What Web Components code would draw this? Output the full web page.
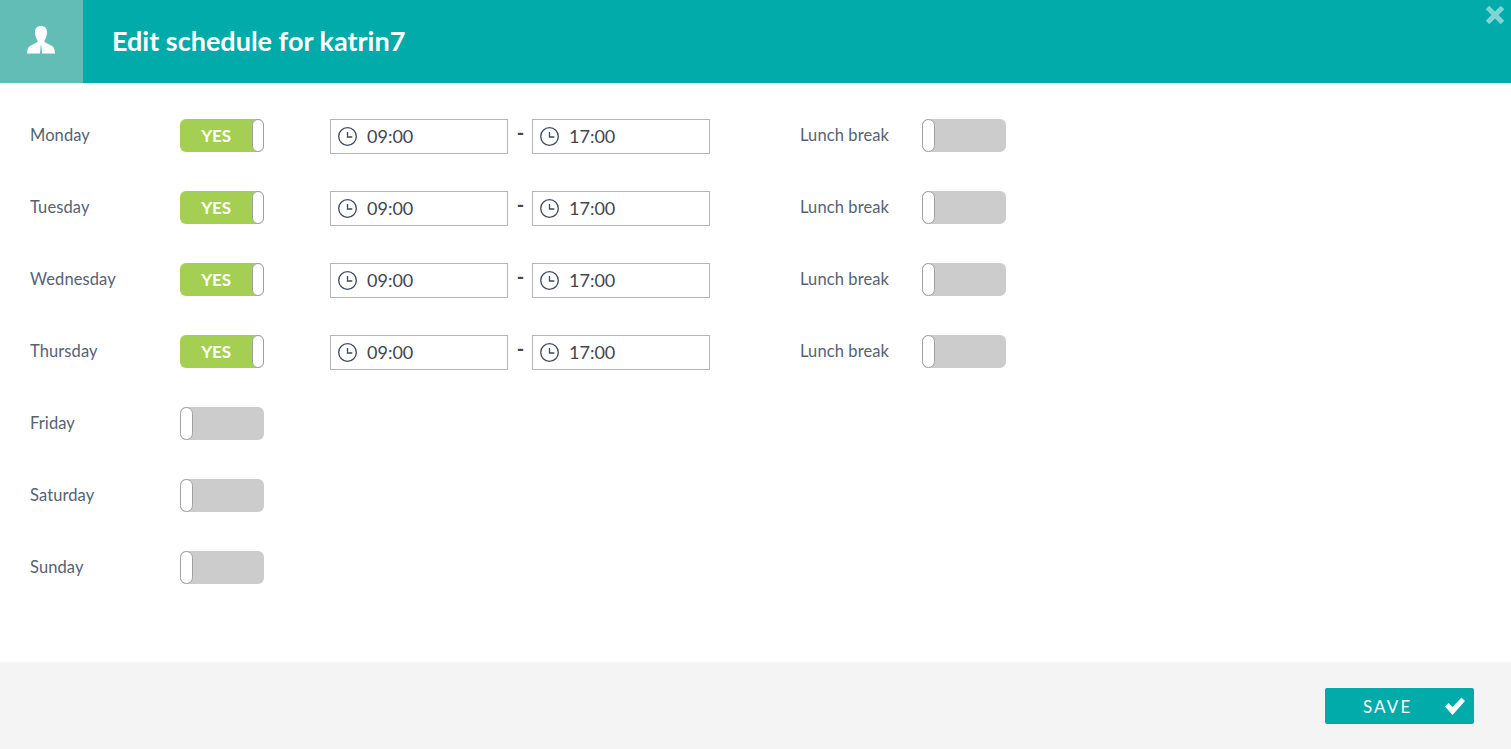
<!DOCTYPE html>
<html lang="en">
<head>
<meta charset="utf-8">
<title>Edit schedule</title>
<style>
  html, body { height: 100%; margin: 0; }
  body { background: #fff; color: #566273; font-family: Lato, 'Open Sans', 'Liberation Sans', sans-serif; overflow: hidden; }
</style>
</head>
<body>
<schedule-dialog heading="Edit schedule for katrin7">
  <schedule-row day="Monday" on from="09:00" to="17:00"></schedule-row>
  <schedule-row day="Tuesday" on from="09:00" to="17:00"></schedule-row>
  <schedule-row day="Wednesday" on from="09:00" to="17:00"></schedule-row>
  <schedule-row day="Thursday" on from="09:00" to="17:00"></schedule-row>
  <schedule-row day="Friday"></schedule-row>
  <schedule-row day="Saturday"></schedule-row>
  <schedule-row day="Sunday"></schedule-row>
</schedule-dialog>

<script>
class ToggleSwitch extends HTMLElement {
  constructor() {
    super();
    this.attachShadow( {mode: 'open'} );
    this.shadowRoot.innerHTML = `
      <style>
        :host {
          background: #cccccc;
          border-radius: 6px;
          box-sizing: border-box;
          display: flex;
          flex: none;
          height: 33px;
          position: relative;
          width: 84px;
        }
        :host( [on] ) {
          background: #a5cf52;
        }
        span {
          color: #fff;
          display: none;
          font-size: 17px;
          font-weight: 700;
          letter-spacing: -0.2px;
          line-height: 33px;
          text-align: center;
          width: 72px;
        }
        :host( [on] ) span {
          display: block;
        }
        i {
          background: #fff;
          border: 1px solid #a0a0a0;
          border-radius: 6.5px;
          box-sizing: border-box;
          height: 33px;
          left: 0;
          position: absolute;
          top: 0;
          width: 13px;
        }
        :host( [on] ) i {
          left: auto;
          right: 0;
          width: 12px;
        }
      </style>
      <span>YES</span>
      <i></i>
    `;
  }
}

class TimeField extends HTMLElement {
  constructor() {
    super();
    this.attachShadow( {mode: 'open'} );
    this.shadowRoot.innerHTML = `
      <style>
        :host {
          align-items: center;
          border: 1px solid #b5b5b5;
          box-sizing: border-box;
          color: #3f4650;
          display: flex;
          flex: none;
          font-size: 18px;
          gap: 10px;
          height: 35px;
          padding: 0 0 0 7px;
          width: 178px;
        }
        svg {
          display: block;
          flex: none;
          height: 19px;
          width: 19px;
        }
        span {
          margin-top: -2px;
        }
      </style>
      <svg viewBox="0 0 19 19" fill="none" stroke="#3d4a5c" stroke-width="1.3">
        <circle cx="9.5" cy="9.5" r="8.8"></circle>
        <path d="M9.5 5v5h4.8"></path>
      </svg>
      <span></span>
    `;
  }

  connectedCallback() {
    this.shadowRoot.querySelector( 'span' ).textContent = this.getAttribute( 'value' );
  }
}

class ScheduleRow extends HTMLElement {
  constructor() {
    super();
    this.attachShadow( {mode: 'open'} );
    this.shadowRoot.innerHTML = `
      <style>
        :host {
          align-items: flex-start;
          display: flex;
          height: 72px;
        }
        .label {
          font-size: 16.5px;
          letter-spacing: 0.1px;
          line-height: 33px;
        }
        .day {
          width: 150px;
        }
        .times {
          align-items: flex-start;
          display: flex;
          margin-left: 66px;
        }
        .dash {
          box-sizing: border-box;
          color: #3f4650;
          font-size: 20px;
          font-weight: 700;
          line-height: 26px;
          padding-left: 1px;
          text-align: center;
          width: 24px;
        }
        .lunch {
          margin-left: 90px;
          width: 122px;
        }
      </style>
      <span class="label day"></span>
      <toggle-switch class="main"></toggle-switch>
    `;
  }

  connectedCallback() {
    this.shadowRoot.querySelector( '.day' ).textContent = this.getAttribute( 'day' );

    if( !this.hasAttribute( 'on' ) ) return;

    this.shadowRoot.querySelector( '.main' ).setAttribute( 'on', '' );
    this.shadowRoot.appendChild( document.createRange().createContextualFragment( `
      <div class="times">
        <time-field value="${this.getAttribute( 'from' )}"></time-field>
        <span class="dash">-</span>
        <time-field value="${this.getAttribute( 'to' )}"></time-field>
      </div>
      <span class="label lunch">Lunch break</span>
      <toggle-switch></toggle-switch>
    ` ) );
  }
}

class ScheduleDialog extends HTMLElement {
  constructor() {
    super();
    this.attachShadow( {mode: 'open'} );
    this.shadowRoot.innerHTML = `
      <style>
        :host {
          display: flex;
          flex-direction: column;
          height: 749px;
        }
        header {
          align-items: center;
          background: #00abaa;
          display: flex;
          flex: none;
          height: 83px;
          position: relative;
        }
        .avatar {
          align-items: center;
          background: #62bdb6;
          display: flex;
          height: 83px;
          justify-content: center;
          width: 83px;
        }
        .avatar svg {
          display: block;
          height: 28px;
          margin: 0 1px 3px 0;
          width: 28px;
        }
        h1 {
          color: #fff;
          font-size: 27px;
          font-weight: 700;
          margin: -2px 0 0 29px;
        }
        .close {
          height: 20px;
          position: absolute;
          right: 6px;
          top: 5px;
          width: 20px;
        }
        main {
          box-sizing: border-box;
          flex: 1;
          padding: 36px 30px 0;
        }
        footer {
          align-items: flex-start;
          background: #f4f4f4;
          box-sizing: border-box;
          display: flex;
          flex: none;
          height: 87px;
          justify-content: flex-end;
          padding: 26px 37px 0 0;
        }
        button {
          align-items: center;
          background: #00abaa;
          border: none;
          border-radius: 2px;
          color: #fff;
          display: flex;
          font-family: inherit;
          font-size: 17px;
          height: 36px;
          letter-spacing: 2.1px;
          padding: 0 8px 0 38px;
          width: 149px;
        }
        button span {
          flex: 1;
          text-align: left;
        }
        button svg {
          display: block;
          height: 20px;
          width: 22px;
        }
      </style>
      <header>
        <div class="avatar">
          <svg viewBox="0 0 28 28" fill="#fff">
            <path d="M14 0C17.500 0 20 2 20 6 20 9.500 19 12.500 17.500 14.500V16L25 20C27 21 27.500 23 28 27.500H15L14.300 19.500H13.700L13 27.500H0C.5 23 1 21 3 20L10.500 16V14.500C9 12.500 8 9.500 8 6 8 2 10.500 0 14 0Z"></path>
          </svg>
        </div>
        <h1></h1>
        <svg class="close" viewBox="0 0 20 20" stroke="#7fd5d3" stroke-width="5">
          <path d="M2.5 2.5l15 15M17.500 2.500l-15 15"></path>
        </svg>
      </header>
      <main><slot></slot></main>
      <footer>
        <button type="button">
          <span>SAVE</span>
          <svg viewBox="0 0 22 20" fill="#fff">
            <path d="M1 10.500l3.500-3.500 4 4L17.500 1.500 21 5 8.500 19z"></path>
          </svg>
        </button>
      </footer>
    `;
  }

  connectedCallback() {
    this.shadowRoot.querySelector( 'h1' ).textContent = this.getAttribute( 'heading' );
  }
}

window.customElements.define( 'toggle-switch', ToggleSwitch );
window.customElements.define( 'time-field', TimeField );
window.customElements.define( 'schedule-row', ScheduleRow );
window.customElements.define( 'schedule-dialog', ScheduleDialog );
</script>
</body>
</html>
